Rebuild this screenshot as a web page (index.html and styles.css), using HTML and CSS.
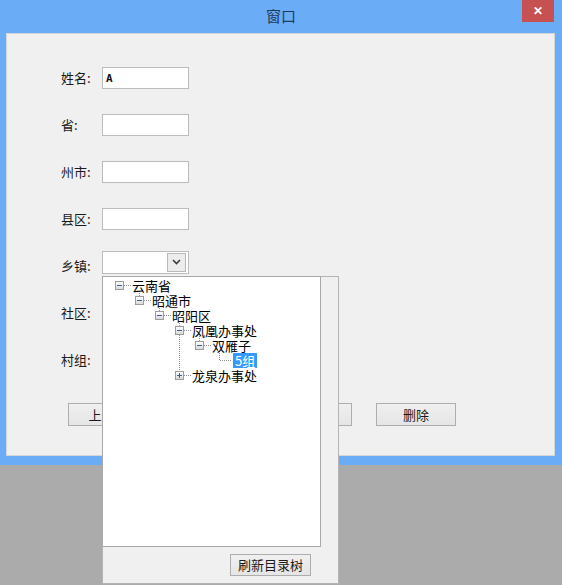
FILE: index.html
```html
<!DOCTYPE html>
<html lang="zh">
<head>
  <meta charset="UTF-8" />
  <meta name="viewport" content="width=device-width, initial-scale=1.0"/>
  <title>窗口</title>
  <link rel="stylesheet" href="styles.css">
</head>
<body>
  <div class="window">
    <div class="titlebar">
      <span class="title">窗口</span>
      <button class="close">✕</button>
    </div>

    <div class="panel">
      <div class="form">
        <div class="row"><label>姓名:</label><input class="field name" type="text" value="A"></div>
        <div class="row"><label>省:</label><input class="field" type="text"></div>
        <div class="row"><label>州市:</label><input class="field" type="text"></div>
        <div class="row"><label>县区:</label><input class="field" type="text"></div>
        <div class="row">
          <label>乡镇:</label>
          <div class="combo">
            <span class="combo-btn">
              <svg width="9" height="6" viewBox="0 0 9 6"><polyline points="1,1 4.5,4.5 8,1" fill="none" stroke="#3c3c3c" stroke-width="1.6"/></svg>
            </span>
          </div>
        </div>
        <div class="row"><label>社区:</label><input class="field" type="text"></div>
        <div class="row"><label>村组:</label><input class="field" type="text"></div>

        <div class="actions">
          <button class="btn">上一条</button>
          <button class="btn">下一条</button>
          <button class="btn">保存</button>
          <button class="btn last">删除</button>
        </div>
      </div>
    </div>

    <!-- dropdown of 乡镇, drawn over the form -->
    <div class="popup">
      <div class="tree">
        <svg class="tree-lines" width="217" height="269">
          <g stroke="#8f8f8f" stroke-width="1" stroke-dasharray="1 1" fill="none">
            <path d="M21 8.5H28"/>
            <path d="M36.5 14V23.5M41 23.5H48"/>
            <path d="M56.5 29V38.5M61 38.5H68"/>
            <path d="M76.5 44V98.5M81 53.5H88M81 98.5H88"/>
            <path d="M96.5 59V68.5M101 68.5H108"/>
            <path d="M116.5 74V83.5H128"/>
          </g>
        </svg>
        <div class="node d0"><span class="toggle open"></span><span class="text">云南省</span></div>
        <div class="node d1"><span class="toggle open"></span><span class="text">昭通市</span></div>
        <div class="node d2"><span class="toggle open"></span><span class="text">昭阳区</span></div>
        <div class="node d3"><span class="toggle open"></span><span class="text">凤凰办事处</span></div>
        <div class="node d4"><span class="toggle open"></span><span class="text">双雁子</span></div>
        <div class="node d5 leaf"><span class="text selected">5组</span></div>
        <div class="node d3"><span class="toggle closed"></span><span class="text">龙泉办事处</span></div>
      </div>
      <div class="popup-footer">
        <button class="btn refresh">刷新目录树</button>
      </div>
    </div>
  </div>
</body>
</html>
```

FILE: styles.css
```css
body {
  margin: 0;
  width: 562px;
  height: 585px;
  background: #ababab;
  font-family: "Noto Sans CJK SC", "Liberation Sans", sans-serif;
  font-size: 13px;
  color: #1a1a1a;
  overflow: hidden;
}
.window {
  position: relative;
  height: 465px;
  background: #6aacf6;
}
.titlebar {
  height: 33px;
  display: flex;
  justify-content: center;
  align-items: flex-start;
}
.title {
  margin-top: 6px;
  font-size: 15px;
  line-height: 20px;
  color: #1f3a5c;
}
.close {
  position: absolute;
  top: 0;
  right: 8px;
  width: 32px;
  height: 22px;
  padding: 0;
  border: none;
  background: #c75050;
  color: #fff;
  font-size: 12px;
  font-weight: bold;
  line-height: 22px;
}
.panel {
  margin: 0 7px 0 6px;
  height: 423px;
  box-sizing: border-box;
  background: #f0f0f0;
  border: 1px solid #d2d6db;
}
.form {
  padding: 33px 0 0 54px;
}
.row {
  display: flex;
  align-items: center;
  height: 22px;
  margin-bottom: 25px;
}
.row label {
  width: 41px;
  line-height: 16px;
}
.field {
  width: 87px;
  height: 22px;
  box-sizing: border-box;
  margin: 0;
  padding: 0 3px;
  border: 1px solid #bcbcbc;
  background: #fff;
  font-family: "DejaVu Sans Mono", monospace;
  font-size: 11px;
  font-weight: bold;
  color: #111;
}
.combo {
  width: 87px;
  height: 23px;
  box-sizing: border-box;
  margin-bottom: 8px;
  border: 1px solid #bcbcbc;
  background: #fff;
  display: flex;
  justify-content: flex-end;
  align-items: center;
  padding-right: 2px;
}
.combo-btn {
  width: 19px;
  height: 19px;
  box-sizing: border-box;
  border: 1px solid #b9b9b9;
  background: #ececec;
  display: flex;
  align-items: center;
  justify-content: center;
}
.actions {
  display: flex;
  gap: 22px;
  margin: 32px 0 0 7px;
}
.btn {
  width: 80px;
  height: 23px;
  padding: 0;
  box-sizing: border-box;
  border: 1px solid #adadad;
  background: linear-gradient(#f0f0f0, #e5e5e5);
  font-family: "Noto Sans CJK SC", sans-serif;
  font-size: 13px;
  color: #1a1a1a;
  line-height: 20px;
}
.btn.last {
  margin-left: 2px;
}
.popup {
  position: absolute;
  left: 102px;
  top: 276px;
  width: 237px;
  height: 308px;
  box-sizing: border-box;
  background: #f0f0f0;
  border: 1px solid #b4b4b4;
}
.tree {
  position: relative;
  width: 219px;
  height: 271px;
  box-sizing: border-box;
  margin: -1px 0 0 -1px;
  padding-top: 1px;
  background: #fff;
  border: 1px solid #a9a9a9;
}
.tree-lines {
  position: absolute;
  left: 0;
  top: 0;
}
.node {
  position: relative;
  display: flex;
  align-items: center;
  height: 15px;
  line-height: 15px;
  color: #000;
}
.d0 { padding-left: 12px; }
.d1 { padding-left: 32px; }
.d2 { padding-left: 52px; }
.d3 { padding-left: 72px; }
.d4 { padding-left: 92px; }
.d5 { padding-left: 112px; }
.leaf .text {
  margin-left: 18px;
}
.toggle {
  position: relative;
  width: 9px;
  height: 9px;
  box-sizing: border-box;
  margin-right: 8px;
  border: 1px solid #9c9c9c;
  background: linear-gradient(#ffffff, #d9d9d9);
}
.toggle::before {
  content: "";
  position: absolute;
  left: 1px;
  top: 3px;
  width: 5px;
  height: 1px;
  background: #3d5d9c;
}
.toggle.closed::after {
  content: "";
  position: absolute;
  left: 3px;
  top: 1px;
  width: 1px;
  height: 5px;
  background: #3d5d9c;
}
.text.selected {
  padding: 0 2px;
  background: #3399ff;
  color: #fff;
}
.popup-footer {
  display: flex;
  justify-content: flex-end;
  padding: 7px 27px 0 0;
}
.refresh {
  width: 81px;
  height: 22px;
}
```
